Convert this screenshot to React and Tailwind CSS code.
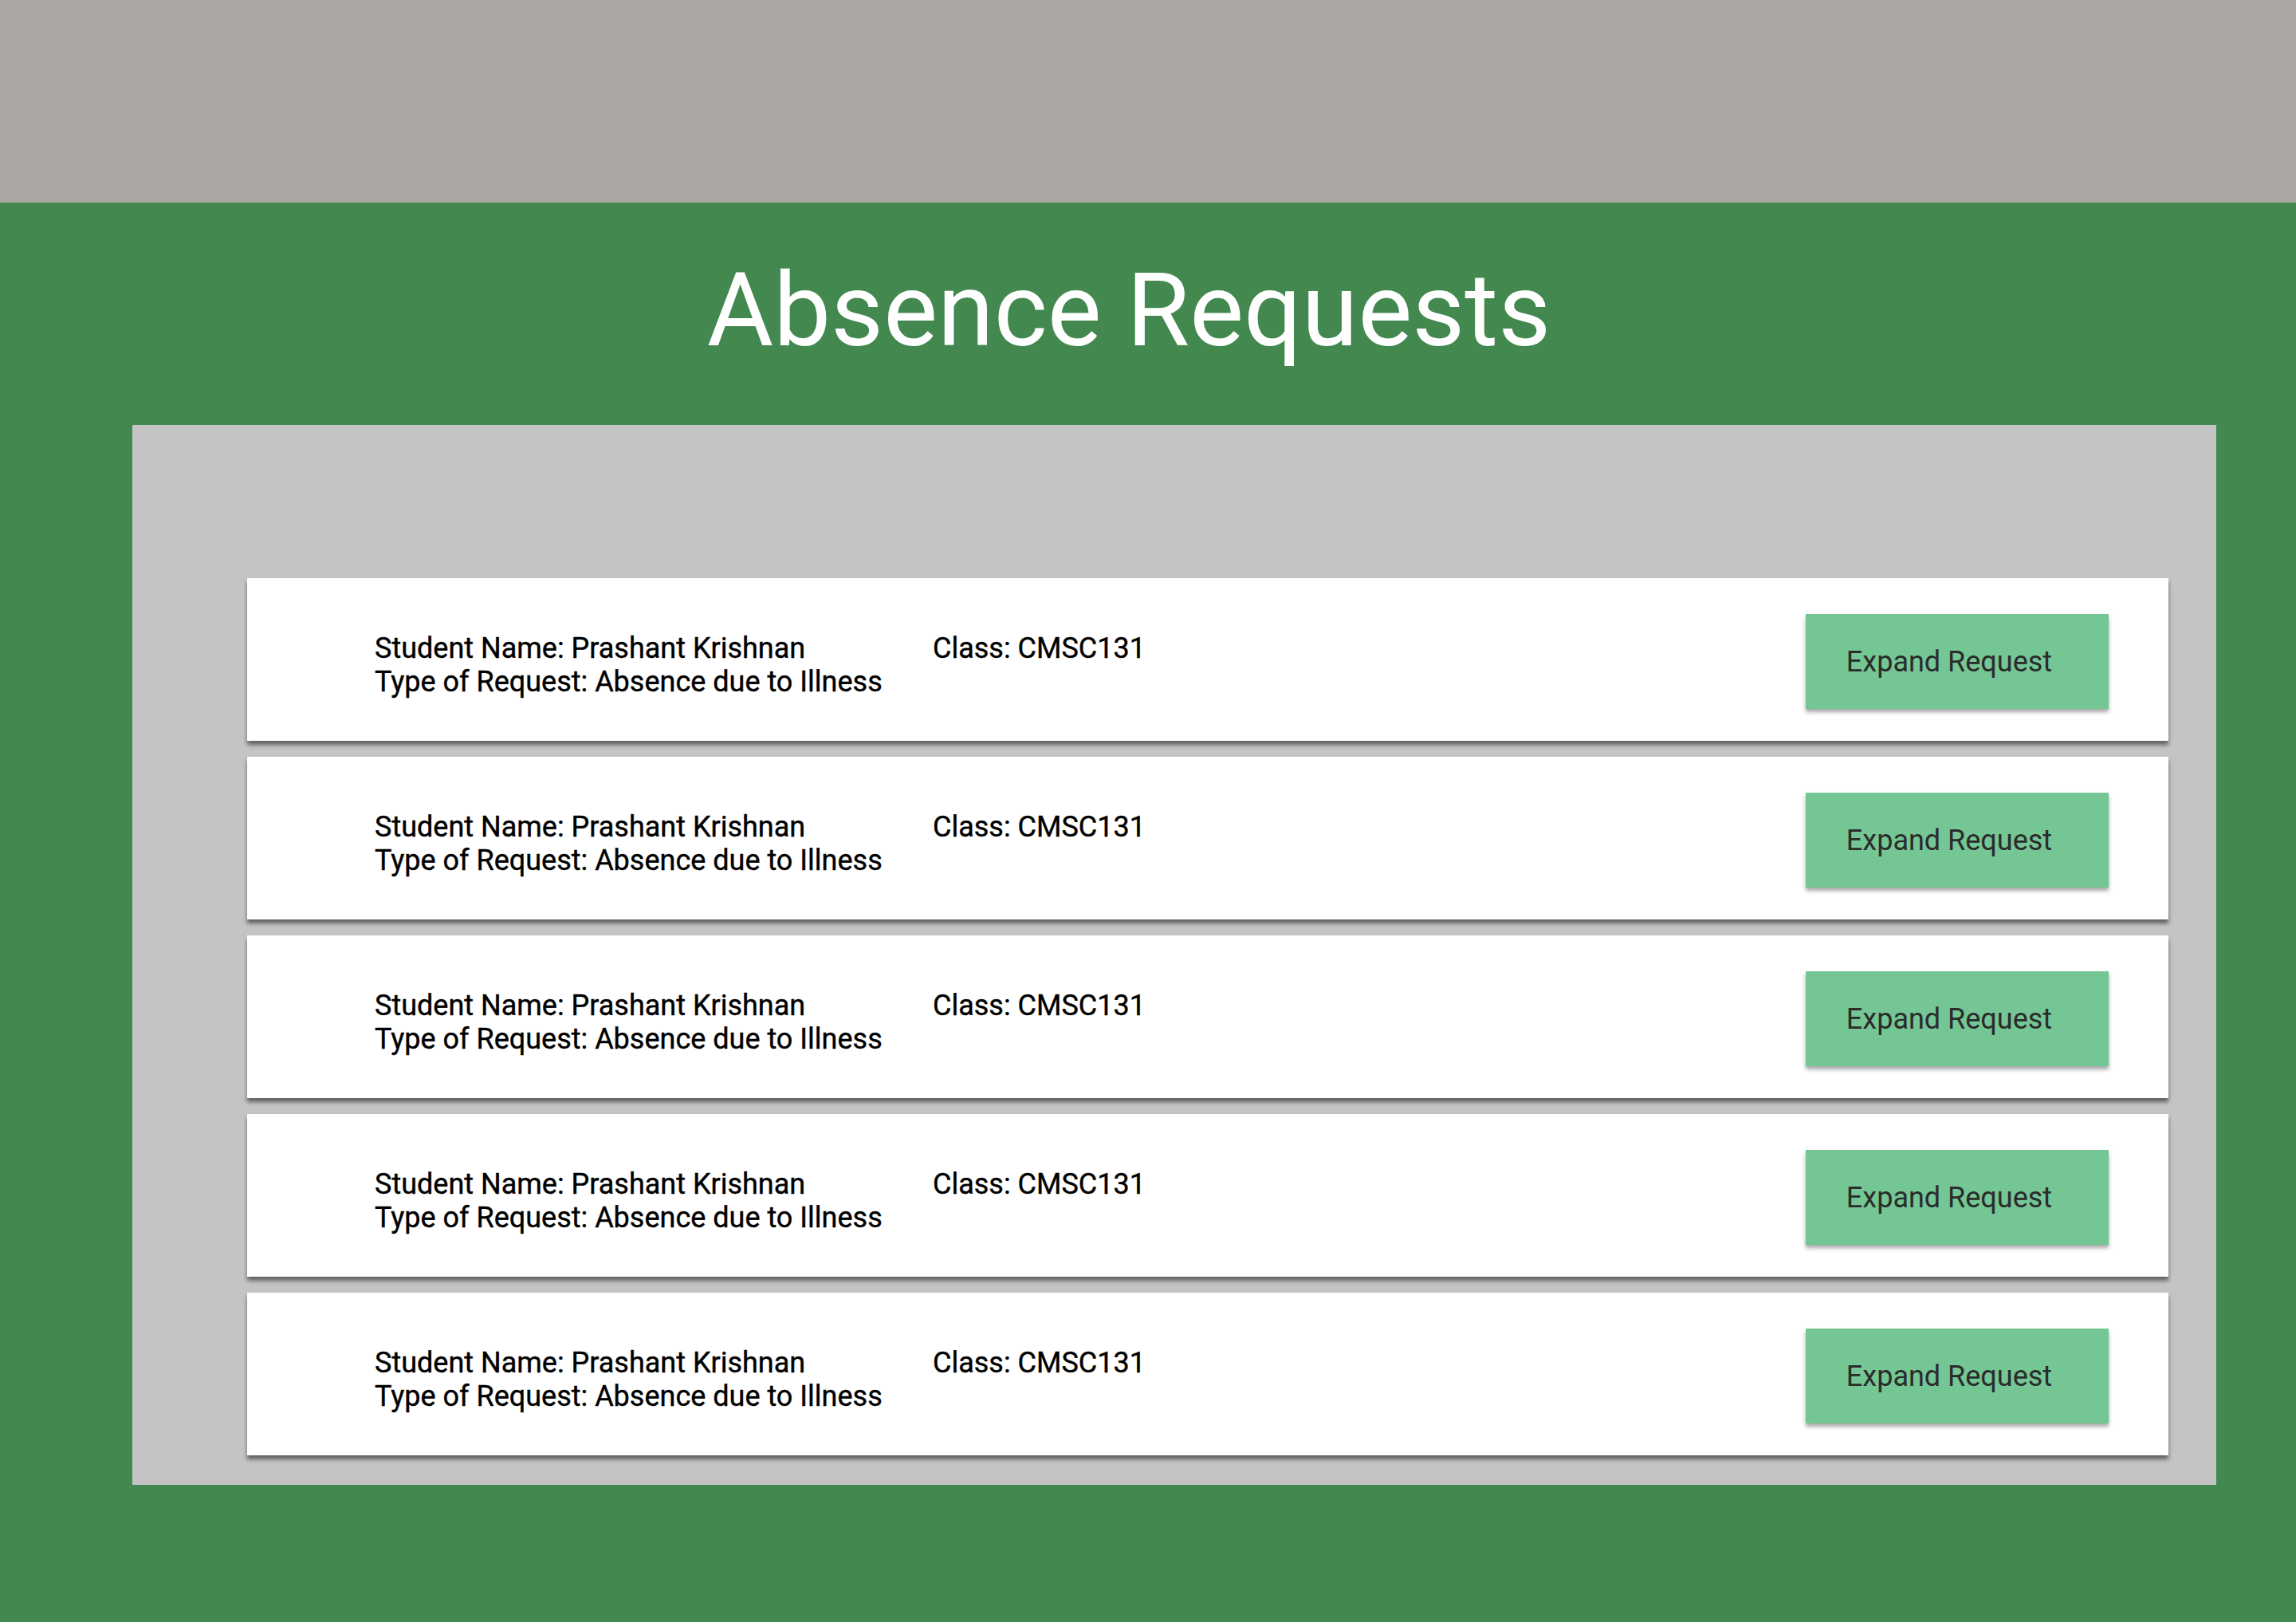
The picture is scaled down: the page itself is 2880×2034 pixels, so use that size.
import React from "react";

const rows = [0, 1, 2, 3, 4];

function RequestCard() {
  return (
    <div className="flex h-[204px] bg-white shadow-[0_5px_5px_rgba(0,0,0,0.5)]">
      <div className="flex shrink-0 pl-[160px] pt-[67px] text-[36px] leading-[42px] text-black [-webkit-text-stroke:0.4px_black]">
        <div className="w-[700px] shrink-0 whitespace-nowrap">
          <div>Student Name: Prashant Krishnan</div>
          <div>Type of Request: Absence due to Illness</div>
        </div>
        <div className="whitespace-nowrap">Class: CMSC131</div>
      </div>
      <div className="ml-auto mr-[75px] mt-[45px]">
        <button className="flex h-[119px] w-[380px] items-center justify-center bg-[#74c794] pr-[20px] text-[36px] text-[#2b2b2b] shadow-[0_4px_5px_rgba(0,0,0,0.35)]">
          Expand Request
        </button>
      </div>
    </div>
  );
}

export default function App() {
  return (
    <div className="flex min-h-[2034px] w-[2880px] flex-col bg-[#42884f] font-['Roboto',sans-serif]">
      <div className="h-[254px] bg-[#aba6a3]" />
      <h1 className="mt-[60px] pr-[48px] text-center text-[128px] font-normal leading-[150px] text-white">
        Absence Requests
      </h1>
      <div className="ml-[166px] mt-[69px] flex w-[2614px] flex-col gap-[20px] bg-[#c4c4c4] pb-[37px] pl-[144px] pr-[60px] pt-[192px]">
        {rows.map((r) => (
          <RequestCard key={r} />
        ))}
      </div>
    </div>
  );
}
